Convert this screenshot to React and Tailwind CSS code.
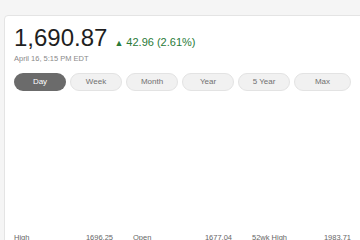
import {useState} from "react";

const ranges = ["Day", "Week", "Month", "Year", "5 Year", "Max"];

const stats = [
	{label: "High", value: "1696.25"},
	{label: "Open", value: "1677.04"},
	{label: "52wk High", value: "1983.71"}
];

function App() {
	const [range, setRange] = useState("Day");

	return (
		<div className="w-[360px] h-[240px] overflow-hidden bg-[#f5f5f5] pt-[15px] pl-[4px] font-['Liberation_Sans',Arial,sans-serif]">
			<div className="w-[380px] h-[260px] bg-white border border-[#e4e4e4] rounded-tl-[4px] pl-[9px] pt-[9px]">
				<div className="flex items-baseline">
					<span className="text-[24px] leading-[25px] text-[#1f1f1f]">1,690.87</span>
					<span className="ml-[7px] text-[11px] leading-[12px] text-[#2a7a38]">
						<span className="text-[9px] mr-[3px]">▲</span>42.96 (2.61%)
					</span>
				</div>
				<div className="mt-[4px] text-[7.5px] leading-[9px] text-[#8a8a8a]">April 16, 5:15 PM EDT</div>
				<div className="mt-[10px] flex gap-[4px]">
					{ranges.map((r) => (
						<button
							key={r}
							onClick={() => setRange(r)}
							className={`h-[18px] rounded-full text-[8px] leading-none ${
								range === r
									? "bg-[#6b6b6b] text-white"
									: "bg-[#f1f1f1] border border-[#e3e3e3] text-[#707070]"
							} ${r === "Max" ? "w-[57px]" : "w-[52px]"}`}
						>
							{r}
						</button>
					))}
				</div>
				<div className="h-[142px]" />
				<div className="flex w-[337px] justify-between text-[7.5px] leading-[10px] text-[#666]">
					{stats.map((s) => (
						<div key={s.label} className="flex justify-between w-[99px]">
							<span>{s.label}</span>
							<span>{s.value}</span>
						</div>
					))}
				</div>
			</div>
		</div>
	);
}

export default App;
